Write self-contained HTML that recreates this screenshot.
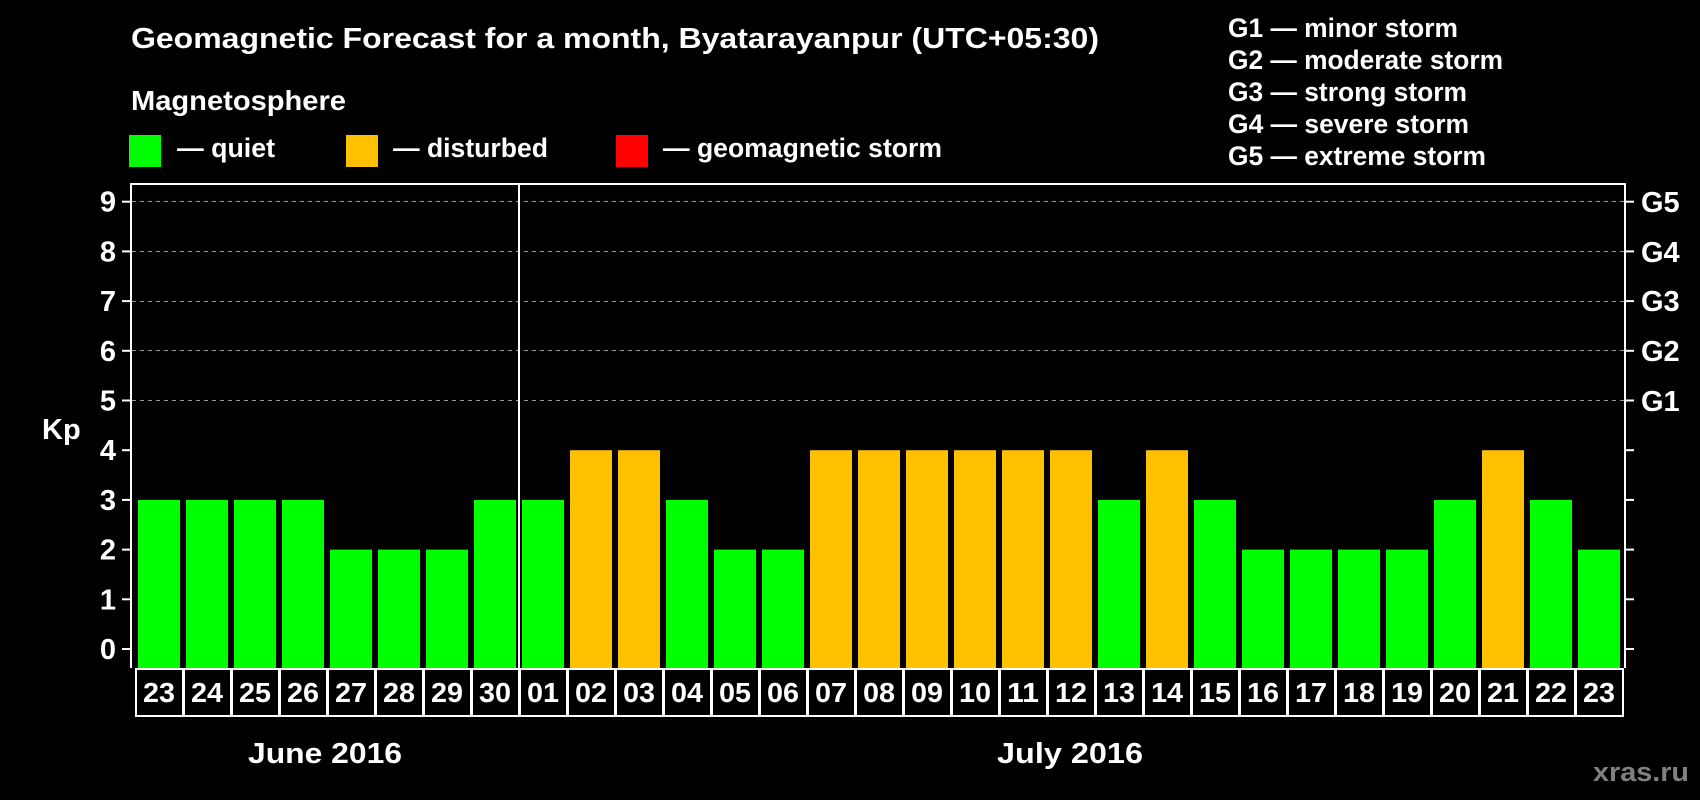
<!DOCTYPE html>
<html><head><meta charset="utf-8"><style>
html,body{margin:0;padding:0;background:#000;width:1700px;height:800px;overflow:hidden}
svg{display:block}
text{font-family:"Liberation Sans",Arial,sans-serif;font-weight:bold;fill:#fff}
</style></head><body>
<svg width="1700" height="800" viewBox="0 0 1700 800">
<rect width="1700" height="800" fill="#000"/>
<text x="131" y="48" font-size="29" textLength="968" lengthAdjust="spacingAndGlyphs">Geomagnetic Forecast for a month, Byatarayanpur (UTC+05:30)</text>
<text x="131" y="110" font-size="28" textLength="215" lengthAdjust="spacingAndGlyphs">Magnetosphere</text>
<rect x="129" y="135" width="32" height="32" fill="#00ff00"/>
<rect x="346" y="135" width="32" height="32" fill="#ffc000"/>
<rect x="616" y="135" width="32" height="32" fill="#ff0000"/>
<text x="177" y="157" font-size="27" textLength="98" lengthAdjust="spacingAndGlyphs">— quiet</text>
<text x="393" y="157" font-size="27" textLength="155" lengthAdjust="spacingAndGlyphs">— disturbed</text>
<text x="663" y="157" font-size="27" textLength="279" lengthAdjust="spacingAndGlyphs">— geomagnetic storm</text>
<g font-size="27">
<text x="1228" y="37" textLength="230" lengthAdjust="spacingAndGlyphs">G1 — minor storm</text>
<text x="1228" y="69" textLength="275" lengthAdjust="spacingAndGlyphs">G2 — moderate storm</text>
<text x="1228" y="101" textLength="239" lengthAdjust="spacingAndGlyphs">G3 — strong storm</text>
<text x="1228" y="133" textLength="241" lengthAdjust="spacingAndGlyphs">G4 — severe storm</text>
<text x="1228" y="165" textLength="258" lengthAdjust="spacingAndGlyphs">G5 — extreme storm</text>
</g>
<g id="grid" stroke="#999" stroke-width="1" stroke-dasharray="4,4">
<line x1="132" x2="1624" y1="201.5" y2="201.5"/>
<line x1="132" x2="1624" y1="251.5" y2="251.5"/>
<line x1="132" x2="1624" y1="301.5" y2="301.5"/>
<line x1="132" x2="1624" y1="350.5" y2="350.5"/>
<line x1="132" x2="1624" y1="400.5" y2="400.5"/>
</g>
<g id="bars"></g>
<g stroke="#fff" stroke-width="2" fill="none">
<polyline points="131,668 131,184 1625,184 1625,668"/>
<line x1="519" y1="184" x2="519" y2="668"/>
</g>
<g id="ticks" stroke="#fff" stroke-width="2"></g>
<g id="boxes"></g>
<g font-size="29" text-anchor="end" id="ylab"></g>
<g font-size="29" id="glab">
<text x="1641" y="212">G5</text>
<text x="1641" y="262">G4</text>
<text x="1641" y="311">G3</text>
<text x="1641" y="361">G2</text>
<text x="1641" y="411">G1</text>
</g>
<text x="42" y="439" font-size="29">Kp</text>
<text x="248" y="763" font-size="29" textLength="154" lengthAdjust="spacingAndGlyphs">June 2016</text>
<text x="997" y="763" font-size="29" textLength="146" lengthAdjust="spacingAndGlyphs">July 2016</text>
<text x="1593" y="781" font-size="27" style="fill:#808080" textLength="96" lengthAdjust="spacingAndGlyphs">xras.ru</text>
</svg>
<script>
var ns="http://www.w3.org/2000/svg";
function el(t,a,p,txt){var e=document.createElementNS(ns,t);for(var k in a)e.setAttribute(k,a[k]);if(txt!=null)e.textContent=txt;p.appendChild(e);return e;}
var v=[3,3,3,3,2,2,2,3,3,4,4,3,2,2,4,4,4,4,4,4,3,4,3,2,2,2,2,3,4,3,2];
var d=["23","24","25","26","27","28","29","30","01","02","03","04","05","06","07","08","09","10","11","12","13","14","15","16","17","18","19","20","21","22","23"];
var bars=document.getElementById("bars"),boxes=document.getElementById("boxes"),ticks=document.getElementById("ticks"),yl=document.getElementById("ylab");
var z=649,u=49.7;
for(var i=0;i<31;i++){var x=135+48*i;
el("rect",{x:x+3,y:z-v[i]*u,width:42,height:668-(z-v[i]*u),fill:v[i]>=4?"#ffc000":"#00ff00"},bars);
el("rect",{x:x+1,y:669,width:47,height:47,fill:"none",stroke:"#fff","stroke-width":2},boxes);
el("text",{x:x+24,y:702,"font-size":"28","text-anchor":"middle",textLength:"32",lengthAdjust:"spacingAndGlyphs"},boxes,d[i]);}
for(var k=0;k<=9;k++){var y=z-k*u;
el("line",{x1:122,x2:131,y1:y,y2:y},ticks);el("line",{x1:1625,x2:1634,y1:y,y2:y},ticks);
el("text",{x:116,y:y+10},yl,String(k));}
</script>
</body></html>
